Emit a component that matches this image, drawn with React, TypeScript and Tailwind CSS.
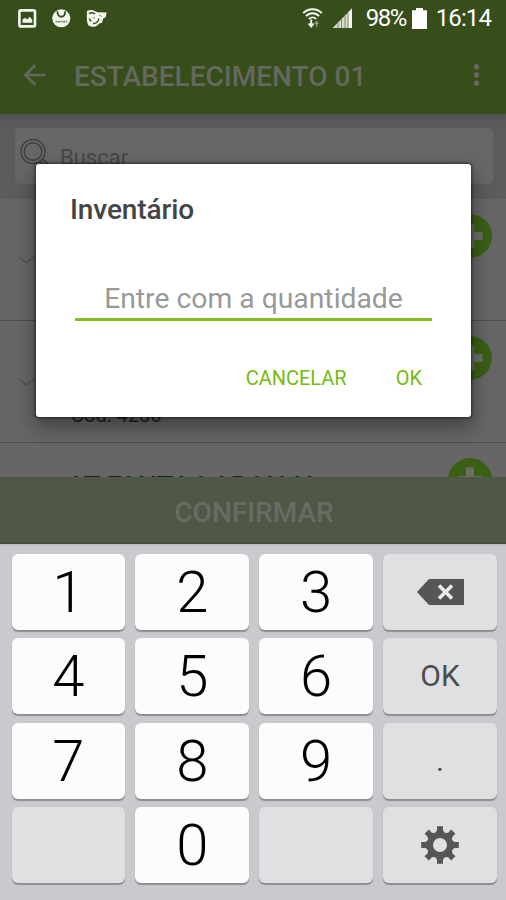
import { useState } from 'react';
import type { ReactNode } from 'react';
import { clsx } from 'clsx';

type Product = {
  name: string;
  code: string;
};

const products: Product[] = [
  { name: '', code: '' },
  { name: '', code: 'Cód: 4286' },
  { name: 'LT FANTA LARANJA', code: '' },
];

function StatusBar() {
  return (
    <div className="flex h-9 items-center justify-between pl-[18px] pr-[15px] text-white">
      <div className="flex items-center gap-[15px]">
        <svg className="h-[19px] w-[19px]" viewBox="0 0 19 19">
          <rect x="1.4" y="1.4" width="15.6" height="16" rx="1.5" fill="none" stroke="#f4f7ef" strokeWidth="2.6" />
          <path d="M4.5 13.8V10.5L7 8.8l2 1.6 2.8-2.6 2.4 3v3z" fill="#f4f7ef" />
        </svg>
        <svg className="h-[19px] w-[19px]" viewBox="0 0 19 19">
          <circle cx="9.3" cy="9.3" r="9" fill="#f4f7ef" />
          <path d="M5.4 2.2c0 7.4 7.8 7.4 7.8 0" fill="none" stroke="#374e1b" strokeWidth="1.8" />
          <path d="M3.5 12.6h11.6" stroke="#7b8b68" strokeWidth="1.6" strokeDasharray="2 .5" />
        </svg>
        <svg className="h-[19px] w-[22px]" viewBox="0 0 22 19">
          <path d="M1 2c3-1.4 6-1 8 .2l2.5 1 9.2.2-1.2 5-2.4 1-1 4.4-3 .6c-2 3.2-7 4.5-10.4 2.2C.7 14 .6 8 1 2z" fill="#f4f7ef" />
          <path d="M3 4.6c2-1.4 4.2-1 6 .4M3.3 9.5c.6 1.6 1 2.6 2.2 2.8M7 14.4c2.2.4 4-.4 5-2.4l1-2.4" fill="none" stroke="#374e1b" strokeWidth="1.5" />
          <path d="M13 6.2l2.8 1.2M7 8.4l2 .8" stroke="#7b8b68" strokeWidth="1" />
        </svg>
      </div>
      <div className="flex items-center">
        <svg className="mr-[9px] h-[21px] w-[21px]" viewBox="0 0 21 21" fill="none" stroke="#f4f7ef">
          <path d="M1.2 5.2C6-.2 15-.2 19.8 5.2" strokeWidth="2" />
          <path d="M4 8.2c3.6-4 9.4-4 13 0" strokeWidth="1.9" />
          <path d="M6.8 11c2.2-2.3 5.2-2.3 7.4 0" strokeWidth="1.8" />
          <path d="M9.2 11.5v7M6.6 15.5l2.6 3 2.4-3" strokeWidth="1.9" />
          <path d="M14.6 19v-5m-1.7 1.9 1.7-2.2 1.7 2.2" stroke="#8f9c7d" strokeWidth="1.4" />
        </svg>
        <svg className="mr-[13px] h-[21px] w-[21px]" viewBox="0 0 21 21">
          <path d="M.5 20L20 .5V20z" fill="#d5dacd" />
          <path d="M16.5 4L20 .5V20h-3.5z" fill="#f4f7ef" />
          <path d="M6 15v5M9.5 11v9M13 8v12M16 5v15" stroke="#76856a" strokeWidth=".9" />
        </svg>
        <span className="mr-[5px] w-[41px] whitespace-nowrap text-[24px] leading-9 tracking-[-1.5px]">98%</span>
        <svg className="mr-[9px] h-[21px] w-[15px]" viewBox="0 0 15 21">
          <path d="M4 0h7v2.3h4V21H0V2.3h4z" fill="#fff" />
        </svg>
        <span className="whitespace-nowrap text-[24px] leading-9 tracking-[-0.9px]">16:14</span>
      </div>
    </div>
  );
}

function Toolbar() {
  return (
    <div className="flex h-[78px] items-center pl-[23px] pr-[26px] text-[#65685f]">
      <svg className="h-[22px] w-[23px]" viewBox="0 0 23 22" fill="none" stroke="currentColor" strokeWidth="2.6">
        <path d="M22.5 11H2.5M12.2 1.2L2.2 11l10 9.8" />
      </svg>
      <h1 className="ml-[28px] flex-1 whitespace-nowrap pt-[3px] text-[28px] font-medium leading-8">ESTABELECIMENTO 01</h1>
      <svg className="h-[22px] w-[7px]" viewBox="0 0 7 22" fill="currentColor">
        <circle cx="3.5" cy="2.7" r="2.7" />
        <circle cx="3.5" cy="11" r="2.7" />
        <circle cx="3.5" cy="19.3" r="2.7" />
      </svg>
    </div>
  );
}

function SearchBar() {
  return (
    <div className="h-[85px] shrink-0 bg-linear-to-b from-[#515151] via-[#5b5b5b] via-10% to-[#5c5c5c] pl-[15px] pr-[13px] pt-[14px]">
      <div className="flex h-14 rounded-[5px] bg-[#676767] pl-[5px] pt-[11px]">
        <svg className="h-[31px] w-[31px]" viewBox="0 0 31 31" fill="none" stroke="#3f3f3f" strokeWidth="1.5">
          <circle cx="13" cy="12.5" r="12" />
          <circle cx="13" cy="12.5" r="8.8" />
          <path d="M20 22l7 7 2.5-2.5-7-6.5" />
        </svg>
        <span className="ml-[9px] pt-[4px] text-[22px] leading-[30px] text-[#474747]">Buscar</span>
      </div>
    </div>
  );
}

function ProductRow({ name, code }: Product) {
  return (
    <div className="flex h-[122px] shrink-0 border-b border-[#4f4f4f] pl-[18px] pr-[14px] pt-[15px]">
      <svg className="mt-[42px] h-2 w-[17px] shrink-0" viewBox="0 0 17 8" fill="none" stroke="#505050" strokeWidth="1.3">
        <path d="M1 1l7.5 6L16 1" />
      </svg>
      <div className="ml-[36px] flex flex-1 flex-col justify-between whitespace-nowrap text-[#202020]">
        <span className="pl-px pt-[13px] text-[27.5px] font-medium leading-[32px]">{name}</span>
        <span className="pb-[15px] text-[20px] leading-6">{code}</span>
      </div>
      <svg className="h-11 w-11 shrink-0" viewBox="0 0 44 44">
        <circle cx="22" cy="22" r="22" fill="#3a5f15" />
        <path d="M22 9.5v25M9.5 22h25" stroke="#6a6d66" strokeWidth="8" />
      </svg>
    </div>
  );
}

type DialogProps = {
  value: string;
  onChange: (value: string) => void;
};

function InventoryDialog({ value, onChange }: DialogProps) {
  return (
    <div className="absolute left-9 top-[164px] h-[253px] w-[435px] rounded-[3px] bg-white shadow-[0_0_3px_1px_rgba(0,0,0,0.5),0_9px_20px_2px_rgba(0,0,0,0.35)]">
      <h2 className="pl-[34px] pt-[30px] text-[28px] font-medium leading-8 tracking-[-0.1px] text-[#444444]">Inventário</h2>
      <div className="ml-[39px] mt-[49px] w-[357px] border-b-[3px] border-[#82c022]">
        <input
          value={value}
          onChange={(e) => onChange(e.target.value)}
          placeholder="Entre com a quantidade"
          className="block h-[43px] w-full pb-[1px] pt-[4px] text-center text-[28.3px] outline-none placeholder:text-[#999999]"
        />
      </div>
      <div className="mt-[45px] flex justify-end pr-[49px] text-[20px] leading-6 text-[#76bb10]">
        <button>CANCELAR</button>
        <button className="ml-[49px]">OK</button>
      </div>
    </div>
  );
}

function BackspaceIcon() {
  return (
    <svg className="h-[26px] w-[47px]" viewBox="0 0 47 26">
      <path d="M0 13L12 0h35v26H12z" fill="#565656" />
      <path d="M22 6.5l13 13M35 6.5l-13 13" stroke="#e9eaeb" strokeWidth="3.6" />
    </svg>
  );
}

function GearIcon() {
  return (
    <svg className="h-[38px] w-[38px]" viewBox="-19 -19 38 38">
      <g fill="#565656">
        {[0, 45, 90, 135, 180, 225, 270, 315].map((angle) => (
          <path key={angle} d="M-6.5-10L-3-14.5V-18.8H3V-14.5L6.5-10z" transform={`rotate(${angle})`} />
        ))}
      </g>
      <circle r="10" fill="none" stroke="#565656" strokeWidth="6" />
    </svg>
  );
}

type Key = {
  id: string;
  label: ReactNode;
  kind: 'digit' | 'action';
};

const keys: Key[] = [
  { id: '1', label: '1', kind: 'digit' },
  { id: '2', label: '2', kind: 'digit' },
  { id: '3', label: '3', kind: 'digit' },
  { id: 'backspace', label: <BackspaceIcon />, kind: 'action' },
  { id: '4', label: '4', kind: 'digit' },
  { id: '5', label: '5', kind: 'digit' },
  { id: '6', label: '6', kind: 'digit' },
  { id: 'ok', label: 'OK', kind: 'action' },
  { id: '7', label: '7', kind: 'digit' },
  { id: '8', label: '8', kind: 'digit' },
  { id: '9', label: '9', kind: 'digit' },
  { id: '.', label: '.', kind: 'action' },
  { id: 'blank-left', label: null, kind: 'action' },
  { id: '0', label: '0', kind: 'digit' },
  { id: 'blank-right', label: null, kind: 'action' },
  { id: 'settings', label: <GearIcon />, kind: 'action' },
];

function Keypad({ onKey }: { onKey: (id: string) => void }) {
  return (
    <div className="h-[356px] border-t-2 border-[#bfc1be] bg-[#c9cacd] pl-[11.5px] pr-[9px] pt-[8px]">
      <div className="grid grid-cols-4 gap-x-[10px] gap-y-[8.3px]">
        {keys.map((key) => (
          <button
            key={key.id}
            onClick={() => onKey(key.id)}
            className={clsx(
              'flex h-[76px] items-center justify-center rounded-[6px] shadow-[0_1.5px_1px_rgba(0,0,0,0.3)]',
              key.kind === 'digit'
                ? 'bg-[#fcfcfc] text-[58px] font-light leading-none text-black'
                : 'bg-[#dfe0e2] text-[30px] leading-none text-[#4c4c4c]'
            )}
          >
            {key.label}
          </button>
        ))}
      </div>
    </div>
  );
}

export default function App() {
  const [quantity, setQuantity] = useState('');

  const handleKey = (id: string) => {
    if (id === 'backspace') {
      setQuantity((q) => q.slice(0, -1));
    } else if (/^[0-9.]$/.test(id)) {
      setQuantity((q) => q + id);
    }
  };

  return (
    <div className="relative h-[900px] w-[506px] overflow-hidden bg-[#666666] font-['Roboto',sans-serif]">
      <header className="h-[114px] bg-[#374e1b]">
        <StatusBar />
        <Toolbar />
      </header>
      <main className="flex h-[363px] flex-col overflow-hidden">
        <SearchBar />
        {products.map((product, index) => (
          <ProductRow key={index} {...product} />
        ))}
      </main>
      <button className="flex h-[67px] w-full items-center justify-center border-b-2 border-[#464d3e] bg-[#4f5745] pl-[2px] pt-[6px] text-[28px] font-medium text-[#686c64]">
        CONFIRMAR
      </button>
      <Keypad onKey={handleKey} />
      <InventoryDialog value={quantity} onChange={setQuantity} />
    </div>
  );
}
